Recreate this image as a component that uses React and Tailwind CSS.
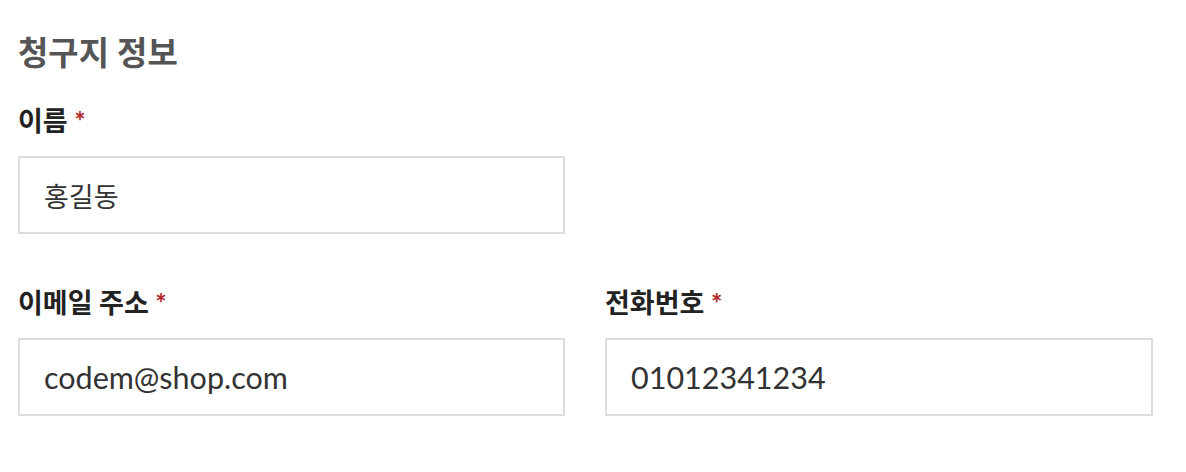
import React from "react";

const Field = ({ label, value, textSize = "text-[30.5px]" }) => {
  return (
    <div className="flex flex-col">
      <label className="text-[27px] leading-[32px] font-bold text-[#222] mb-[19px]">
        {label} <span className="text-[#b3282d]">*</span>
      </label>
      <input
        readOnly
        value={value}
        className={`h-[78px] w-full border-2 border-[#dddddd] bg-white px-6 text-[#333] outline-none ${textSize}`}
      />
    </div>
  );
};

export default function App() {
  return (
    <div
      className="min-h-screen bg-white pt-[34px] pl-[18px]"
      style={{ fontFamily: 'Lato, "Noto Sans CJK KR", sans-serif' }}
    >
      <div className="w-[1135px]">
        <h2 className="text-[33px] leading-[36px] font-bold text-[#555] mb-[35px]">
          청구지 정보
        </h2>
        <div className="grid grid-cols-[547px_548px] gap-x-10 gap-y-[53px]">
          <Field label="이름" value="홍길동" textSize="text-[27px]" />
          <div />
          <Field label="이메일 주소" value="codem@shop.com" />
          <Field label="전화번호" value="01012341234" />
        </div>
      </div>
    </div>
  );
}
